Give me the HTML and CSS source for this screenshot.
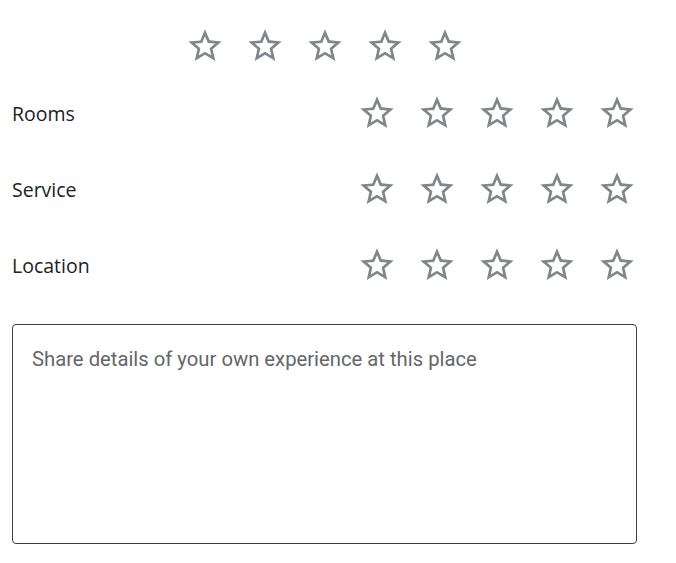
FILE: index.html
```html
<!DOCTYPE html>
<html>
<head>
<meta charset="utf-8">
<link rel="stylesheet" href="styles.css">
</head>
<body>
<div class="review">
  <div class="stars stars-main">
    <svg class="star" viewBox="0 0 24 24"><path d="M22 9.24l-7.19-.62L12 2 9.19 8.63 2 9.24l5.46 4.73L5.82 21 12 17.27 18.18 21l-1.63-7.03L22 9.24zM12 15.4l-3.76 2.27 1-4.28-3.32-2.88 4.38-.38L12 6.1l1.71 4.04 4.38.38-3.32 2.88 1 4.28L12 15.4z"/></svg>
    <svg class="star" viewBox="0 0 24 24"><path d="M22 9.24l-7.19-.62L12 2 9.19 8.63 2 9.24l5.46 4.73L5.82 21 12 17.27 18.18 21l-1.63-7.03L22 9.24zM12 15.4l-3.76 2.27 1-4.28-3.32-2.88 4.38-.38L12 6.1l1.71 4.04 4.38.38-3.32 2.88 1 4.28L12 15.4z"/></svg>
    <svg class="star" viewBox="0 0 24 24"><path d="M22 9.24l-7.19-.62L12 2 9.19 8.63 2 9.24l5.46 4.73L5.82 21 12 17.27 18.18 21l-1.63-7.03L22 9.24zM12 15.4l-3.76 2.27 1-4.28-3.32-2.88 4.38-.38L12 6.1l1.71 4.04 4.38.38-3.32 2.88 1 4.28L12 15.4z"/></svg>
    <svg class="star" viewBox="0 0 24 24"><path d="M22 9.24l-7.19-.62L12 2 9.19 8.63 2 9.24l5.46 4.73L5.82 21 12 17.27 18.18 21l-1.63-7.03L22 9.24zM12 15.4l-3.76 2.27 1-4.28-3.32-2.88 4.38-.38L12 6.1l1.71 4.04 4.38.38-3.32 2.88 1 4.28L12 15.4z"/></svg>
    <svg class="star" viewBox="0 0 24 24"><path d="M22 9.24l-7.19-.62L12 2 9.19 8.63 2 9.24l5.46 4.73L5.82 21 12 17.27 18.18 21l-1.63-7.03L22 9.24zM12 15.4l-3.76 2.27 1-4.28-3.32-2.88 4.38-.38L12 6.1l1.71 4.04 4.38.38-3.32 2.88 1 4.28L12 15.4z"/></svg>
  </div>

  <div class="row">
    <span class="label">Rooms</span>
    <div class="stars">
      <svg class="star" viewBox="0 0 24 24"><path d="M22 9.24l-7.19-.62L12 2 9.19 8.63 2 9.24l5.46 4.73L5.82 21 12 17.27 18.18 21l-1.63-7.03L22 9.24zM12 15.4l-3.76 2.27 1-4.28-3.32-2.88 4.38-.38L12 6.1l1.71 4.04 4.38.38-3.32 2.88 1 4.28L12 15.4z"/></svg>
      <svg class="star" viewBox="0 0 24 24"><path d="M22 9.24l-7.19-.62L12 2 9.19 8.63 2 9.24l5.46 4.73L5.82 21 12 17.27 18.18 21l-1.63-7.03L22 9.24zM12 15.4l-3.76 2.27 1-4.28-3.32-2.88 4.38-.38L12 6.1l1.71 4.04 4.38.38-3.32 2.88 1 4.28L12 15.4z"/></svg>
      <svg class="star" viewBox="0 0 24 24"><path d="M22 9.24l-7.19-.62L12 2 9.19 8.63 2 9.24l5.46 4.73L5.82 21 12 17.27 18.18 21l-1.63-7.03L22 9.24zM12 15.4l-3.76 2.27 1-4.28-3.32-2.88 4.38-.38L12 6.1l1.71 4.04 4.38.38-3.32 2.88 1 4.28L12 15.4z"/></svg>
      <svg class="star" viewBox="0 0 24 24"><path d="M22 9.24l-7.19-.62L12 2 9.19 8.63 2 9.24l5.46 4.73L5.82 21 12 17.27 18.18 21l-1.63-7.03L22 9.24zM12 15.4l-3.76 2.27 1-4.28-3.32-2.88 4.38-.38L12 6.1l1.71 4.04 4.38.38-3.32 2.88 1 4.28L12 15.4z"/></svg>
      <svg class="star" viewBox="0 0 24 24"><path d="M22 9.24l-7.19-.62L12 2 9.19 8.63 2 9.24l5.46 4.73L5.82 21 12 17.27 18.18 21l-1.63-7.03L22 9.24zM12 15.4l-3.76 2.27 1-4.28-3.32-2.88 4.38-.38L12 6.1l1.71 4.04 4.38.38-3.32 2.88 1 4.28L12 15.4z"/></svg>
    </div>
  </div>

  <div class="row">
    <span class="label">Service</span>
    <div class="stars">
      <svg class="star" viewBox="0 0 24 24"><path d="M22 9.24l-7.19-.62L12 2 9.19 8.63 2 9.24l5.46 4.73L5.82 21 12 17.27 18.18 21l-1.63-7.03L22 9.24zM12 15.4l-3.76 2.27 1-4.28-3.32-2.88 4.38-.38L12 6.1l1.71 4.04 4.38.38-3.32 2.88 1 4.28L12 15.4z"/></svg>
      <svg class="star" viewBox="0 0 24 24"><path d="M22 9.24l-7.19-.62L12 2 9.19 8.63 2 9.24l5.46 4.73L5.82 21 12 17.27 18.18 21l-1.63-7.03L22 9.24zM12 15.4l-3.76 2.27 1-4.28-3.32-2.88 4.38-.38L12 6.1l1.71 4.04 4.38.38-3.32 2.88 1 4.28L12 15.4z"/></svg>
      <svg class="star" viewBox="0 0 24 24"><path d="M22 9.24l-7.19-.62L12 2 9.19 8.63 2 9.24l5.46 4.73L5.82 21 12 17.27 18.18 21l-1.63-7.03L22 9.24zM12 15.4l-3.76 2.27 1-4.28-3.32-2.88 4.38-.38L12 6.1l1.71 4.04 4.38.38-3.32 2.88 1 4.28L12 15.4z"/></svg>
      <svg class="star" viewBox="0 0 24 24"><path d="M22 9.24l-7.19-.62L12 2 9.19 8.63 2 9.24l5.46 4.73L5.82 21 12 17.27 18.18 21l-1.63-7.03L22 9.24zM12 15.4l-3.76 2.27 1-4.28-3.32-2.88 4.38-.38L12 6.1l1.71 4.04 4.38.38-3.32 2.88 1 4.28L12 15.4z"/></svg>
      <svg class="star" viewBox="0 0 24 24"><path d="M22 9.24l-7.19-.62L12 2 9.19 8.63 2 9.24l5.46 4.73L5.82 21 12 17.27 18.18 21l-1.63-7.03L22 9.24zM12 15.4l-3.76 2.27 1-4.28-3.32-2.88 4.38-.38L12 6.1l1.71 4.04 4.38.38-3.32 2.88 1 4.28L12 15.4z"/></svg>
    </div>
  </div>

  <div class="row">
    <span class="label">Location</span>
    <div class="stars">
      <svg class="star" viewBox="0 0 24 24"><path d="M22 9.24l-7.19-.62L12 2 9.19 8.63 2 9.24l5.46 4.73L5.82 21 12 17.27 18.18 21l-1.63-7.03L22 9.24zM12 15.4l-3.76 2.27 1-4.28-3.32-2.88 4.38-.38L12 6.1l1.71 4.04 4.38.38-3.32 2.88 1 4.28L12 15.4z"/></svg>
      <svg class="star" viewBox="0 0 24 24"><path d="M22 9.24l-7.19-.62L12 2 9.19 8.63 2 9.24l5.46 4.73L5.82 21 12 17.27 18.18 21l-1.63-7.03L22 9.24zM12 15.4l-3.76 2.27 1-4.28-3.32-2.88 4.38-.38L12 6.1l1.71 4.04 4.38.38-3.32 2.88 1 4.28L12 15.4z"/></svg>
      <svg class="star" viewBox="0 0 24 24"><path d="M22 9.24l-7.19-.62L12 2 9.19 8.63 2 9.24l5.46 4.73L5.82 21 12 17.27 18.18 21l-1.63-7.03L22 9.24zM12 15.4l-3.76 2.27 1-4.28-3.32-2.88 4.38-.38L12 6.1l1.71 4.04 4.38.38-3.32 2.88 1 4.28L12 15.4z"/></svg>
      <svg class="star" viewBox="0 0 24 24"><path d="M22 9.24l-7.19-.62L12 2 9.19 8.63 2 9.24l5.46 4.73L5.82 21 12 17.27 18.18 21l-1.63-7.03L22 9.24zM12 15.4l-3.76 2.27 1-4.28-3.32-2.88 4.38-.38L12 6.1l1.71 4.04 4.38.38-3.32 2.88 1 4.28L12 15.4z"/></svg>
      <svg class="star" viewBox="0 0 24 24"><path d="M22 9.24l-7.19-.62L12 2 9.19 8.63 2 9.24l5.46 4.73L5.82 21 12 17.27 18.18 21l-1.63-7.03L22 9.24zM12 15.4l-3.76 2.27 1-4.28-3.32-2.88 4.38-.38L12 6.1l1.71 4.04 4.38.38-3.32 2.88 1 4.28L12 15.4z"/></svg>
    </div>
  </div>

  <textarea class="comment" placeholder="Share details of your own experience at this place"></textarea>
</div>
</body>
</html>
```

FILE: styles.css
```css
html, body {
  margin: 0;
  padding: 0;
  background: #ffffff;
}

.review {
  width: 625px;
  margin-left: 12px;
  padding-top: 26px;
  display: flex;
  flex-direction: column;
}

.stars {
  display: flex;
  gap: 20px;
}

.stars-main {
  justify-content: center;
  margin-bottom: 9px;
}

.star {
  width: 40px;
  height: 40px;
  fill: #80868b;
  display: block;
}

.row {
  height: 76px;
  display: flex;
  align-items: center;
  justify-content: space-between;
}

.label {
  font-family: "Open Sans", "Noto Sans", sans-serif;
  font-size: 19.5px;
  color: #202124;
}

.comment {
  margin-top: 21px;
  box-sizing: border-box;
  width: 625px;
  height: 220px;
  border: 1px solid #3c4043;
  border-radius: 4px;
  padding: 22px 19px;
  font-family: Roboto, "Liberation Sans", sans-serif;
  font-size: 20.25px;
  line-height: 24px;
  color: #202124;
  resize: none;
  outline: none;
}

.comment::placeholder {
  color: #63666a;
  opacity: 1;
}
```
